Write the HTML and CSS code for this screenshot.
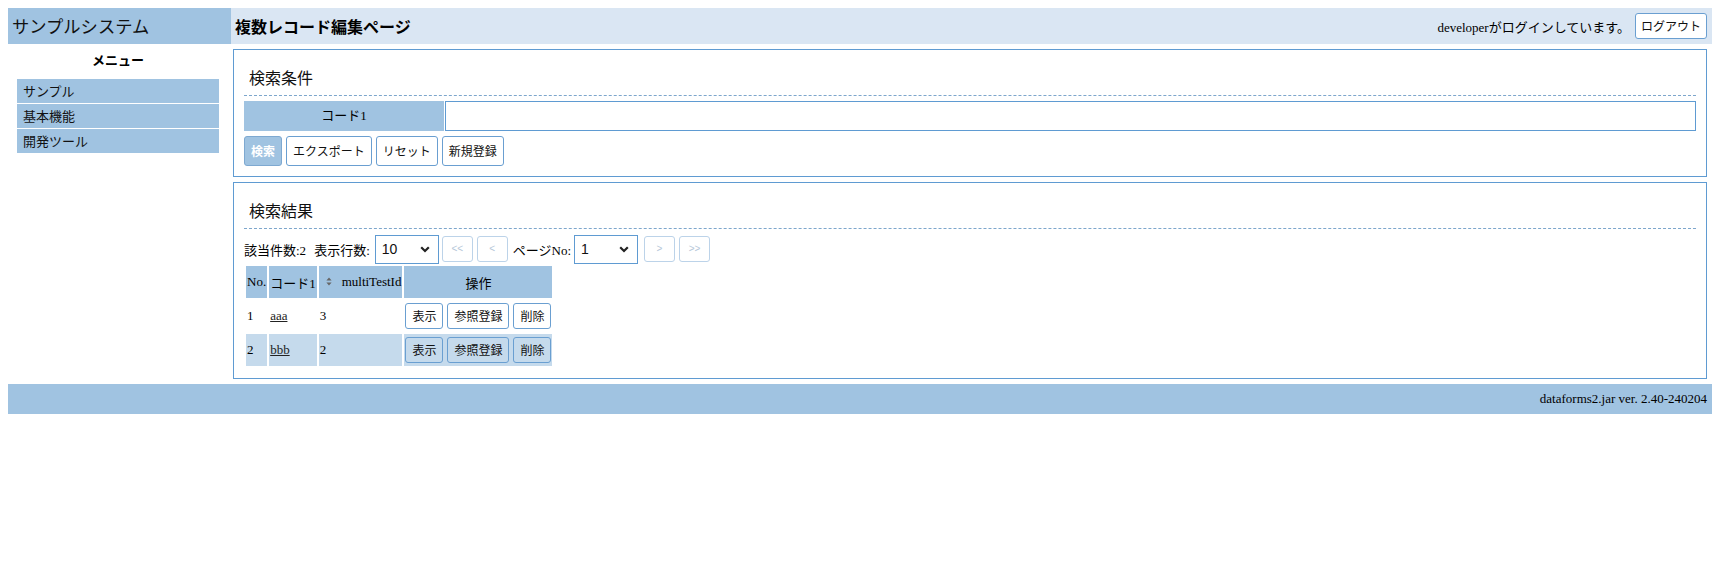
FILE: index.html
```html
<!DOCTYPE html>
<html lang="ja">
<head>
<meta charset="utf-8">
<title>複数レコード編集ページ</title>
<link rel="stylesheet" href="styles.css">
</head>
<body>
<div class="header">
  <div class="sys-name">サンプルシステム</div>
  <div class="page-head">
    <h1 class="page-title">複数レコード編集ページ</h1>
    <div class="user-info">developerがログインしています。</div>
    <button class="btn btn-logout" type="button">ログアウト</button>
  </div>
</div>
<div class="layout">
  <div class="sidebar">
    <div class="menu">
      <div class="menu-title">メニュー</div>
      <div class="menu-item">サンプル</div>
      <div class="menu-item">基本機能</div>
      <div class="menu-item">開発ツール</div>
    </div>
  </div>
  <div class="main">
    <div class="panel">
      <div class="panel-title">検索条件</div>
      <div class="form-row">
        <div class="form-label">コード1</div>
        <input class="form-input" type="text">
      </div>
      <div class="btn-row">
        <button class="btn btn-big btn-primary" type="button">検索</button>
        <button class="btn btn-big" type="button">エクスポート</button>
        <button class="btn btn-big" type="button">リセット</button>
        <button class="btn btn-big" type="button">新規登録</button>
      </div>
    </div>
    <div class="panel">
      <div class="panel-title">検索結果</div>
      <div class="pager">
        <span class="hit-count">該当件数:2</span>
        <span class="pager-label">表示行数:</span>
        <span class="select-wrap">
          <select class="sel"><option>10</option></select>
          <svg class="chev" width="10" height="7" viewBox="0 0 10 7"><path d="M1.2 1.2 L5 5 L8.8 1.2" fill="none" stroke="#222" stroke-width="2.2"/></svg>
        </span>
        <button class="btn btn-page first" type="button" disabled>&lt;&lt;</button>
        <button class="btn btn-page" type="button" disabled>&lt;</button>
        <span class="pager-label page-no">ページNo:</span>
        <span class="select-wrap">
          <select class="sel"><option>1</option></select>
          <svg class="chev" width="10" height="7" viewBox="0 0 10 7"><path d="M1.2 1.2 L5 5 L8.8 1.2" fill="none" stroke="#222" stroke-width="2.2"/></svg>
        </span>
        <button class="btn btn-page next" type="button" disabled>&gt;</button>
        <button class="btn btn-page" type="button" disabled>&gt;&gt;</button>
      </div>
      <table class="list">
        <thead>
          <tr>
            <th class="c-no">No.</th>
            <th class="c-code">コード1</th>
            <th class="c-id"><span class="sort-icon"><svg width="6" height="9" viewBox="0 0 6 9"><path d="M3 0.5 L5.6 3.6 L0.4 3.6 Z M3 8.5 L5.6 5.4 L0.4 5.4 Z" fill="#666"/></svg></span>multiTestId</th>
            <th class="c-op">操作</th>
          </tr>
        </thead>
        <tbody>
          <tr>
            <td>1</td>
            <td><a class="link" href="#">aaa</a></td>
            <td>3</td>
            <td><div class="ops"><button class="btn btn-op" type="button">表示</button><button class="btn btn-op" type="button">参照登録</button><button class="btn btn-op" type="button">削除</button></div></td>
          </tr>
          <tr class="alt">
            <td>2</td>
            <td><a class="link" href="#">bbb</a></td>
            <td>2</td>
            <td><div class="ops"><button class="btn btn-op" type="button">表示</button><button class="btn btn-op" type="button">参照登録</button><button class="btn btn-op" type="button">削除</button></div></td>
          </tr>
        </tbody>
      </table>
    </div>
  </div>
</div>
<div class="footer">dataforms2.jar ver. 2.40-240204</div>
</body>
</html>
```
FILE: styles.css
```css
body {
  margin: 8px;
  font-family: "Liberation Serif", "Noto Sans CJK JP", serif;
  font-size: 13px;
  color: #000;
  background: #fff;
}

.header {
  display: flex;
  height: 36px;
}

.sys-name {
  width: 219px;
  padding-left: 4px;
  background: #a0c3e1;
  font-family: "Noto Sans CJK JP", sans-serif;
  font-size: 17.3px;
  line-height: 36px;
  color: #111;
}

.page-head {
  flex: 1;
  display: flex;
  align-items: center;
  padding: 0 5px 0 4px;
  background: #dae6f3;
}

.page-title {
  margin: 0;
  font-family: "Noto Sans CJK JP", sans-serif;
  font-size: 16px;
  font-weight: bold;
}

.user-info {
  margin-left: auto;
  margin-right: 5px;
}

.btn {
  font-family: "Noto Sans CJK JP", sans-serif;
  font-size: 12px;
  color: #111;
  background: #fff;
  border: 1px solid #6a9fd1;
  border-radius: 3px;
  padding: 0 6px;
  margin: 0;
  height: 26px;
  line-height: 1;
  cursor: pointer;
}

.btn-logout {
  padding: 0 5px;
}

.layout {
  display: flex;
  align-items: flex-start;
}

.sidebar {
  width: 223px;
  flex: none;
  padding-top: 5px;
}

.menu {
  margin: 0 12px 0 9px;
}

.menu-title {
  text-align: center;
  font-family: "Noto Sans CJK JP", sans-serif;
  font-weight: bold;
  line-height: 22px;
  margin-bottom: 8px;
}

.menu-item {
  height: 24px;
  line-height: 24px;
  padding-left: 6px;
  margin-bottom: 1px;
  background: #a0c3e1;
  font-family: "Noto Sans CJK JP", sans-serif;
  color: #111;
}

.main {
  flex: 1;
  padding: 5px 5px 0 2px;
}

.panel {
  border: 1px solid #5f9bd2;
  padding: 10px;
  margin-bottom: 5px;
}

.panel-title {
  height: 35px;
  line-height: 35px;
  padding-left: 5px;
  border-bottom: 1px dashed #7da6cc;
  font-family: "Noto Sans CJK JP", sans-serif;
  font-size: 16px;
  color: #111;
}

.form-row {
  display: flex;
  margin-top: 5px;
  height: 30px;
  gap: 1px;
}

.form-label {
  width: 200px;
  background: #a0c3e1;
  text-align: center;
  line-height: 30px;
}

.form-input {
  flex: 1;
  margin: 0;
  border: 1px solid #5f9bd2;
  padding: 0 4px;
  height: 30px;
  box-sizing: border-box;
  background: #fff;
}

.btn-row {
  display: flex;
  gap: 4px;
  margin-top: 5px;
}

.btn-big {
  height: 30px;
}

.btn-primary {
  background: #a0c3e1;
  border-color: #7ea9d1;
  color: #fff;
  font-weight: bold;
}

.pager {
  display: flex;
  align-items: center;
  height: 30px;
  margin-top: 5px;
}

.hit-count {
  margin-right: 8px;
}

.pager-label {
  margin-right: 5px;
}

.page-no {
  margin-left: 5px;
  margin-right: 3px;
}

.select-wrap {
  position: relative;
  display: inline-block;
  height: 29px;
}

.sel {
  appearance: none;
  -webkit-appearance: none;
  width: 64px;
  height: 29px;
  margin: 0;
  padding: 0 0 0 6px;
  border: 1px solid #5f9bd2;
  border-radius: 0;
  background: #fff;
  font-family: "Liberation Sans", sans-serif;
  font-size: 14px;
  color: #111;
}

.chev {
  position: absolute;
  right: 9px;
  top: 11px;
  pointer-events: none;
}

.btn-page {
  width: 31px;
  padding: 0;
  margin-left: 4px;
  border-color: #bcd3e9;
  color: #b5c7d9;
  font-family: "Liberation Sans", sans-serif;
  font-size: 10px;
  cursor: default;
}

.btn-page.first {
  margin-left: 3px;
}

.btn-page.next {
  margin-left: 6px;
}

.list {
  border-spacing: 2px;
}

.list th,
.list td {
  padding: 1px;
  height: 30px;
  vertical-align: middle;
}

.list th {
  background: #a0c3e1;
  font-weight: normal;
  text-align: left;
}

.list th.c-op {
  text-align: center;
  font-family: "Noto Sans CJK JP", sans-serif;
}

.sort-icon {
  display: inline-block;
  width: 22px;
  padding-left: 6px;
  box-sizing: border-box;
}

.list tr.alt td {
  background: #c5daec;
}

.link {
  color: #222;
  text-decoration: underline;
}

.ops {
  display: flex;
  gap: 4px;
}

.btn-op {
  background: transparent;
  padding: 0 6px;
}

.footer {
  height: 30px;
  line-height: 30px;
  background: #a0c3e1;
  text-align: right;
  padding-right: 5px;
}
```
